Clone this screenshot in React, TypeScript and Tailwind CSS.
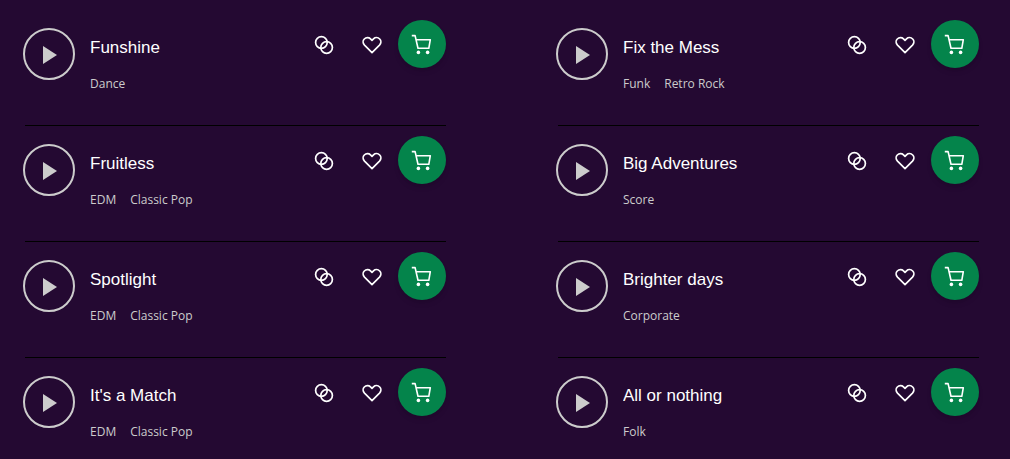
interface Track {
  title: string;
  genres: string[];
}

const tracks: Track[] = [
  { title: 'Funshine', genres: ['Dance'] },
  { title: 'Fix the Mess', genres: ['Funk', 'Retro Rock'] },
  { title: 'Fruitless', genres: ['EDM', 'Classic Pop'] },
  { title: 'Big Adventures', genres: ['Score'] },
  { title: 'Spotlight', genres: ['EDM', 'Classic Pop'] },
  { title: 'Brighter days', genres: ['Corporate'] },
  { title: "It's a Match", genres: ['EDM', 'Classic Pop'] },
  { title: 'All or nothing', genres: ['Folk'] },
];

function PlayIcon() {
  return (
    <svg viewBox="0 0 14 18" className="ml-0.5 mt-0.5 h-[18px] w-[14px]" fill="currentColor" aria-hidden="true">
      <path d="M0 0L14 9L0 18Z" />
    </svg>
  );
}

function SimilarIcon() {
  return (
    <svg viewBox="0 0 24 24" className="h-6 w-6" fill="none" stroke="currentColor" strokeWidth="1.7" aria-hidden="true">
      <circle cx="9.4" cy="9.5" r="5.8" />
      <circle cx="14.6" cy="14.5" r="5.8" />
    </svg>
  );
}

function HeartIcon() {
  return (
    <svg viewBox="0 0 24 24" className="h-6 w-6" fill="none" stroke="currentColor" strokeWidth="1.7" strokeLinejoin="round" aria-hidden="true">
      <path d="M12 19.6L4.5 12.1C2.7 10.2 2.7 7.6 4.3 6C6 4.3 8.8 4.2 10.5 5.9L12 7.4L13.5 5.9C15.2 4.2 18 4.3 19.7 6C21.3 7.6 21.3 10.2 19.5 12.1Z" />
    </svg>
  );
}

function CartIcon() {
  return (
    <svg viewBox="0 0 24 24" className="h-6 w-6" fill="none" stroke="currentColor" strokeWidth="1.6" strokeLinejoin="round" aria-hidden="true">
      <path d="M1.8 3.6H5.1L8 16.3H18.8L20.3 7.7H6" />
      <circle cx="8.4" cy="20.4" r="1.8" fill="currentColor" stroke="none" />
      <circle cx="17.6" cy="20.4" r="1.8" fill="currentColor" stroke="none" />
    </svg>
  );
}

function TrackRow({ track }: { track: Track }) {
  return (
    <li className="flex h-[116px] items-start border-b border-black nth-last-[-n+2]:h-[101px] nth-last-[-n+2]:border-b-0">
      <button
        type="button"
        aria-label={`Play ${track.title}`}
        className="-ml-0.5 mt-[18px] flex h-[52px] w-[52px] shrink-0 items-center justify-center rounded-full border-2 border-[#cccccc] text-[#cccccc]"
      >
        <PlayIcon />
      </button>

      <div className="ml-[15px] min-w-0 flex-1 pt-[26px]">
        <h3 className="truncate font-['Liberation_Sans',Arial,sans-serif] text-[17px] leading-6 text-white">{track.title}</h3>
        <ul className="mt-[14px] flex gap-[14px] font-['Open_Sans',sans-serif] text-xs leading-5 text-[#cccccc]">
          {track.genres.map((genre) => (
            <li key={genre}>
              <a href="#">{genre}</a>
            </li>
          ))}
        </ul>
      </div>

      {/* Actions */}
      <div className="flex shrink-0 items-start pt-[10px] text-white">
        <button type="button" aria-label="Find similar" className="flex h-[50px] w-12 items-center justify-center">
          <SimilarIcon />
        </button>
        <button type="button" aria-label="Add to favorites" className="flex h-[50px] w-12 items-center justify-center">
          <HeartIcon />
        </button>
        <button
          type="button"
          aria-label="Add to cart"
          className="ml-0.5 flex h-12 w-12 items-center justify-center rounded-full bg-[#04844b] shadow-md"
        >
          <CartIcon />
        </button>
      </div>
    </li>
  );
}

export default function App() {
  return (
    <main className="min-h-screen bg-[#240932] pl-[25px] pr-[31px] pt-[10px]">
      <ul className="grid grid-cols-2 gap-x-28">
        {tracks.map((track) => (
          <TrackRow key={track.title} track={track} />
        ))}
      </ul>
    </main>
  );
}
